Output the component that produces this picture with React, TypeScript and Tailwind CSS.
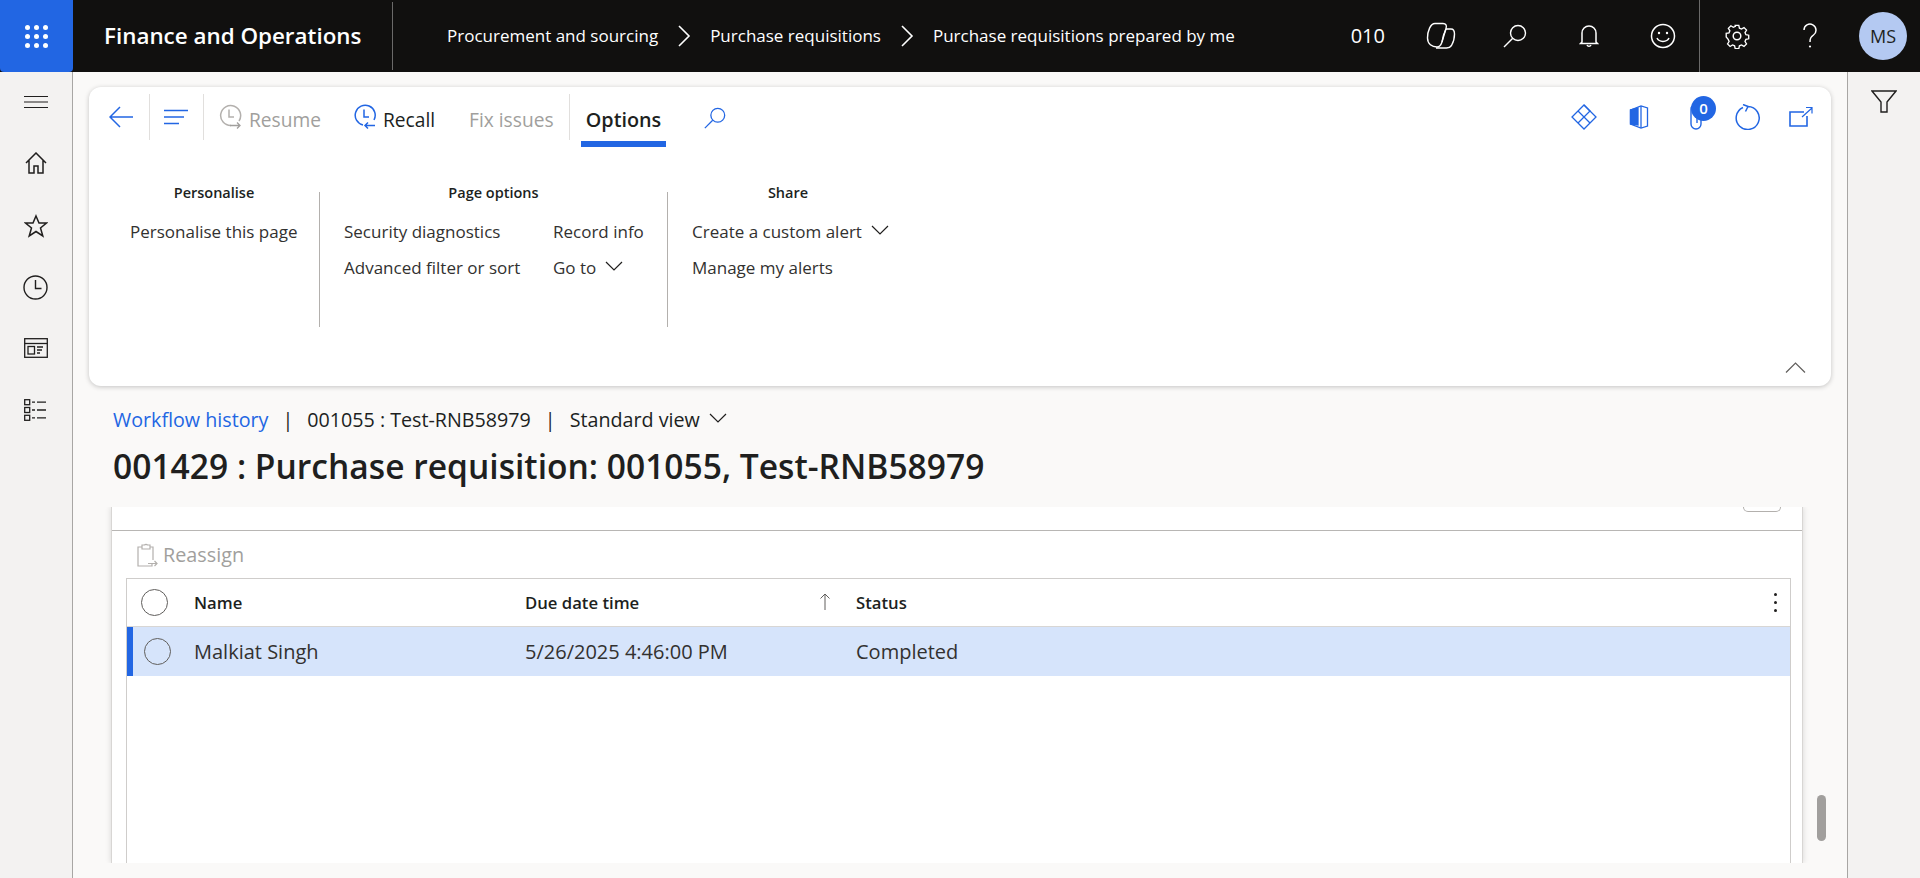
import React from "react";

const S = ({ w = 24, h = 24, vb = "0 0 24 24", c = "currentColor", sw = 1.5, children, className = "" }: any) => (
  <svg width={w} height={h} viewBox={vb} fill="none" stroke={c} strokeWidth={sw} className={"shrink-0 " + className}>{children}</svg>
);
const Chevron = ({ w = 18, h = 10, c = "#201f1e" }: any) => (
  <svg width={w} height={h} viewBox="0 0 18 10" fill="none" stroke={c} strokeWidth="1.2" className="mb-[4px] shrink-0"><path d="M1 1l8 8 8-8" /></svg>
);
const Crumb = () => (
  <svg width="14" height="22" viewBox="0 0 14 22" fill="none" stroke="#fff" strokeWidth="1.6" className="shrink-0"><path d="M2 1l10 10L2 21" /></svg>
);
const Search = ({ c = "#fff", s = 26 }: any) => (
  <S w={s} h={s} vb="0 0 26 26" c={c} sw={1.4}><circle cx="16" cy="10" r="7.5" /><path d="M10.5 15.5L2 24" /></S>
);
const HistoryIcon = ({ c, arrow }: any) => (
  <S w={24} h={26} vb="0 0 24 26" c={c} sw={1.5}>
    <path d="M13 21.5a10 10 0 1 1 8-4.5" />
    <path d="M11 5.5v7.5h5" />
    <path d="M12 21.5h10M19 18.5l3 3-3 3" stroke={arrow} strokeWidth={1.3} />
  </S>
);
const RecallIcon = () => (
  <S w={24} h={26} vb="0 0 24 26" c="#2266e3" sw={1.5}>
    <path d="M10 21a10 10 0 1 1 11-5" />
    <path d="M11 5.5v7.5h5" />
    <path d="M12 21.5h10M15 18.5l-3 3 3 3" />
  </S>
);

function TopBar() {
  return (
    <header className="flex h-[72px] items-center bg-[#11100f] text-white">
      <div className="flex h-[72px] w-[73px] items-center justify-center rounded-b bg-[#2266e3]">
        <div className="grid grid-cols-3 gap-x-[4px] gap-y-[4px]">
          {Array.from({ length: 9 }).map((_, i) => <span key={i} className="h-[5px] w-[5px] rounded-full bg-white" />)}
        </div>
      </div>
      <div className="ml-[31px] w-[288px] text-[22.4px] font-semibold leading-none">Finance and Operations</div>
      <div className="h-[68px] w-px bg-[#6b6a69]" />
      <nav className="ml-[54px] flex items-center text-[17px]">
        <span>Procurement and sourcing</span>
        <span className="mx-[19px]"><Crumb /></span>
        <span>Purchase requisitions</span>
        <span className="mx-[19px]"><Crumb /></span>
        <span>Purchase requisitions prepared by me</span>
      </nav>
      <div className="ml-auto flex h-full items-center">
        <span className="mr-[19px] text-[20px]">010</span>
        <div className="flex h-full w-[74px] items-center justify-center">
          <S w={30} h={28} vb="0 0 30 28" c="#fff" sw={1.4}>
            <path d="M9 1.500h8c3 0 4 2 3 5L16 20c-1 3-2 5-5 5-5 0-9.500-3-9.500-9 0-7 3-14.500 7.500-14.500z" />
            <path d="M20 7h5c2.500 0 3.500 2 3.500 5 0 5-1.500 9-3 11.500-1 1.500-2.500 2.500-5 2.500H10" />
            <path d="M16 20c.5-4 2-9 4-13" />
          </S>
        </div>
        <div className="flex h-full w-[74px] items-center justify-center"><Search /></div>
        <div className="flex h-full w-[74px] items-center justify-center">
          <S w={20} h={24} vb="0 0 20 24" c="#fff" sw={1.5}>
            <path d="M3 18V9a7 7 0 0 1 14 0v9l1.500 1.500h-17z" /><path d="M8 21a2.200 2.200 0 0 0 4 0" />
          </S>
        </div>
        <div className="flex h-full w-[73px] items-center justify-center">
          <S w={26} h={26} vb="0 0 26 26" c="#fff" sw={1.5}>
            <circle cx="13" cy="13" r="11.500" /><path d="M7 15c2 4.500 10 4.500 12 0" />
            <circle cx="9" cy="10" r="1.200" fill="#fff" stroke="none" /><circle cx="17" cy="10" r="1.200" fill="#fff" stroke="none" />
          </S>
        </div>
        <div className="h-full w-px bg-[#6b6a69]" />
        <div className="flex h-full w-[73px] items-center justify-center">
          <S w={26} h={26} vb="0 0 26 26" c="#fff" sw={1.5}>
            <circle cx="13" cy="13" r="3.800" />
            <path d="M11 2h4l.7 3.200 2.300 1 2.800-1.700 2.800 2.800-1.700 2.800 1 2.300 3.100.6v4l-3.100.7-1 2.300 1.700 2.700-2.800 2.800-2.800-1.700-2.300 1-.7 3.100h-4l-.7-3.100-2.300-1-2.700 1.700-2.800-2.800 1.700-2.700-1-2.300L1 15v-4l3.100-.6 1-2.300-1.700-2.800 2.800-2.800 2.700 1.700 2.300-1z" transform="translate(1.300 0.500) scale(.9)" />
          </S>
        </div>
        <div className="flex h-full w-[73px] items-center justify-center">
          <S w={16} h={26} vb="0 0 16 26" c="#fff" sw={1.5}>
            <path d="M2 7a6 6 0 1 1 9.500 5C9 14 8 15 8 19" /><circle cx="8" cy="23.500" r="1.100" fill="#fff" stroke="none" />
          </S>
        </div>
        <div className="ml-[13px] mr-[13px] flex h-[48px] w-[48px] items-center justify-center rounded-full bg-[#b4c9f2] text-[18px] text-[#201f1e]">MS</div>
      </div>
    </header>
  );
}

function LeftRail() {
  const c = "#201f1e";
  return (
    <aside className="flex w-[73px] shrink-0 flex-col items-center border-r border-[#a8a6a4] bg-[#f3f2f1] pt-[24px] pr-[1px]">
      <S w={24} h={12} vb="0 0 24 12" c={c} sw={1}><path d="M0 .5h24M0 6h24M0 11.500h24" /></S>
      <div className="mt-[44px] h-[22px]"><S w={22} h={22} vb="0 0 22 22" c={c} sw={1.5}><path d="M1 11L11 1l10 10M4 8.500V21h5v-7h4v7h5V8.500" /></S></div>
      <div className="mt-[40px] h-[24px]"><S w={24} h={24} vb="0 0 24 24" c={c} sw={1.5}><path d="M12 2l3 7h7.500l-6 5 2.300 8L12 17.500 5.200 22l2.300-8-6-5H9z" /></S></div>
      <div className="mt-[37px] h-[25px]"><S w={25} h={25} vb="0 0 25 25" c={c} sw={1.4}><circle cx="12.500" cy="12.500" r="11.500" /><path d="M12.500 5v8.500h6" /></S></div>
      <div className="mt-[38px] h-[20px]"><S w={24} h={20} vb="0 0 24 20" c={c} sw={1.3}><rect x=".7" y=".7" width="22.600" height="18.600" /><path d="M.7 5.500h22.600" /><rect x="4" y="8.500" width="6.500" height="7.500" /><path d="M13 9h6M13 12h5M13 15h3" /></S></div>
      <div className="mt-[41px] h-[22px]"><S w={24} h={22} vb="0 0 24 22" c={c} sw={1.3}><rect x=".7" y=".7" width="5" height="5" /><rect x=".7" y="8.500" width="5" height="5" /><rect x=".7" y="16.300" width="5" height="5" /><path d="M8 3.200h3M13 3.200h9M8 11h3M13 11h9M8 18.800h3M13 18.800h9" /></S></div>
    </aside>
  );
}

function Ribbon() {
  const b = "#2266e3";
  return (
    <section className="mx-[16px] mt-[15px] h-[299px] shrink-0 rounded-[12px] bg-white shadow-[0_1px_5px_rgba(0,0,0,0.22)]">
      <div className="flex h-[86px] items-start pt-[7px]">
        <div className="flex h-[46px] w-[60px] items-center justify-center pl-[3px]">
          <S w={24} h={22} vb="0 0 24 22" c={b} sw={1.5}><path d="M11 1L1 11l10 10M1 11h23" /></S>
        </div>
        <div className="h-[46px] w-px bg-[#e1dfdd]" />
        <div className="flex h-[46px] w-[53px] items-center justify-center pr-[2px]">
          <S w={24} h={16} vb="0 0 24 16" c={b} sw={1.5}><path d="M0 1.500h24M0 8h20M0 14.500h15" /></S>
        </div>
        <div className="h-[46px] w-px bg-[#e1dfdd]" />
        <div className="ml-[14px] flex h-[46px] items-center gap-[7px] text-[19.200px] text-[#a19f9d]">
          <HistoryIcon c="#b3b0ad" arrow="#a19f9d" />
          <span className="w-[71px] pt-[6px]">Resume</span>
        </div>
        <div className="ml-[33px] flex h-[46px] items-center gap-[6px] text-[19.200px] text-[#201f1e]">
          <RecallIcon />
          <span className="w-[53px] pt-[6px]">Recall</span>
        </div>
        <div className="ml-[33px] flex h-[46px] w-[100px] items-center whitespace-nowrap pt-[6px] text-[19.200px] text-[#a19f9d]">Fix issues</div>
        <div className="h-[46px] w-px bg-[#e1dfdd]" />
        <div className="ml-[11px] flex h-[53px] w-[85px] items-center justify-center border-b-[6px] border-[#2266e3] pt-[5px] text-[19.800px] font-semibold text-[#201f1e]">Options</div>
        <div className="ml-[37px] mt-[12px]"><Search c={b} s={24} /></div>
        <div className="ml-auto flex h-[46px] items-center pr-[18px]">
          <S w={26} h={26} vb="0 0 26 26" c={b} sw={1.3}><path d="M13 1l12 12-12 12L1 13z" /><path d="M13 1l6 6-12 12M7 7l12 12" /></S>
          <div className="ml-[32px]">
            <S w={20} h={24} vb="0 0 20 24" c={b} sw={1.3}>
              <path d="M1.500 5L12 1l6.500 2v18L12 23 1.500 19z" />
              <path d="M1.500 5L9 3v17l-7.500-1z" fill={b} />
              <path d="M12 1v22" />
            </S>
          </div>
          <div className="relative ml-[40px]">
            <S w={14} h={26} vb="0 0 14 26" c={b} sw={1.4}><path d="M12 6v14a5 5 0 0 1-10 0V5a3 3 0 0 1 6 0v14" /></S>
            <span className="absolute left-[2px] top-[-8px] flex h-[25px] w-[25px] items-center justify-center rounded-full bg-[#2266e3] text-[15px] font-semibold text-white">0</span>
          </div>
          <div className="ml-[32px]"><S w={26} h={26} vb="0 0 26 26" c={b} sw={1.5}><path d="M8 3.500a11.500 11.500 0 1 0 5-1M8 .5l5 2-2.500 5" /></S></div>
          <div className="ml-[28px]"><S w={24} h={22} vb="0 0 24 22" c={b} sw={1.6}><path d="M18 10v10H1V6h14" /><path d="M13 11L23 2M17 1.500h6v6" strokeWidth={1.2} /></S></div>
        </div>
      </div>
      <div className="flex h-[154px] items-stretch pt-[10px] text-[17px] text-[#323130]">
        <div className="w-[230px]">
          <div className="pl-[20px] text-center text-[14.500px] font-semibold leading-[20px] text-[#201f1e]">Personalise</div>
          <div className="mt-[19px] pl-[41px] leading-[20px]">Personalise this page</div>
        </div>
        <div className="mt-[9px] w-px bg-[#b3b0ad]" />
        <div className="w-[347px]">
          <div className="text-center text-[14.500px] font-semibold leading-[20px] text-[#201f1e]">Page options</div>
          <div className="mt-[19px] grid grid-cols-[209px_1fr] gap-y-[16px] pl-[24px] leading-[20px]">
            <span>Security diagnostics</span><span>Record info</span>
            <span>Advanced filter or sort</span><span className="flex items-center gap-[9px]">Go to <Chevron /></span>
          </div>
        </div>
        <div className="mt-[9px] w-px bg-[#b3b0ad]" />
        <div className="w-[240px]">
          <div className="text-center text-[14.500px] font-semibold leading-[20px] text-[#201f1e]">Share</div>
          <div className="mt-[19px] flex flex-col gap-y-[16px] pl-[24px] leading-[20px]">
            <span className="flex items-center gap-[9px] whitespace-nowrap">Create a custom alert <Chevron /></span>
            <span>Manage my alerts</span>
          </div>
        </div>
      </div>
      <div className="flex justify-end pr-[25px] pt-[35px]">
        <svg width="21" height="11" viewBox="0 0 21 11" fill="none" stroke="#605e5c" strokeWidth="1.2"><path d="M1 10.500l9.500-9.500 9.500 9.500" /></svg>
      </div>
    </section>
  );
}

function Content() {
  return (
    <div className="flex min-h-0 flex-1 flex-col">
      <div className="ml-[40px] mt-[22px] flex h-[24px] items-center text-[19.700px] leading-none text-[#201f1e]">
        <span className="text-[#2266e3]">Workflow history</span>
        <span className="mx-[14px]">|</span>
        <span>001055 : Test-RNB58979</span>
        <span className="mx-[14px]">|</span>
        <span>Standard view</span>
        <span className="ml-[9px] flex items-center"><Chevron /></span>
      </div>
      <h1 className="ml-[40px] mt-[15px] whitespace-nowrap text-[33.600px] font-semibold leading-[38px] text-[#201f1e]">001429 : Purchase requisition: 001055, Test-RNB58979</h1>
      <div className="mt-[22px] flex h-[356px] shrink-0">
        <div className="ml-[38px] flex w-[1692px] shrink-0 flex-col border-x border-[#d8d6d4] bg-white shadow-[0_0_6px_rgba(0,0,0,0.14)] [clip-path:inset(0_-8px_0_-8px)]">
          <div className="flex h-[24px] shrink-0 justify-end border-b border-[#b8b6b4] pr-[21px]">
            <div className="h-[5px] w-[38px] rounded-b-[5px] border border-t-0 border-[#b3b0ad]" />
          </div>
          <div className="flex h-[47px] shrink-0 items-center pl-[24px] text-[19.800px] text-[#a19f9d]">
            <S w={22} h={24} vb="0 0 22 24" c="#b3b0ad" sw={1.2} className="mr-[5px]">
              <path d="M6 4H2v19h14v-3M14 4h3v13" /><path d="M6 6V2h2.500a2 2 0 0 1 3 0H14v4z" /><path d="M12 20.500h9M18.500 18l2.500 2.500-2.500 2.500" />
            </S>
            Reassign
          </div>
          <div className="ml-[14px] mr-[11px] flex min-h-0 flex-1 flex-col border-x border-t border-[#cfcdcb]">
            <div className="flex h-[48px] shrink-0 items-center border-b border-[#d8d6d4] text-[16.700px] font-semibold text-[#201f1e]">
              <div className="flex w-[67px] justify-center pr-[12px]"><span className="h-[27px] w-[27px] rounded-full border border-[#605e5c]" /></div>
              <div className="w-[331px]">Name</div>
              <div className="relative flex w-[331px] items-center">
                Due date time
                <svg width="12" height="18" viewBox="0 0 12 18" fill="none" stroke="#605e5c" strokeWidth="1" className="absolute left-[294px] top-[3px]"><path d="M6 17V1M1.500 5.500L6 1l4.500 4.500" /></svg>
              </div>
              <div className="flex-1">Status</div>
              <div className="flex w-[30px] flex-col items-start gap-[5px] pl-[14px]">
                <span className="h-[3px] w-[3px] rounded-full bg-[#201f1e]" />
                <span className="h-[3px] w-[3px] rounded-full bg-[#201f1e]" />
                <span className="h-[3px] w-[3px] rounded-full bg-[#201f1e]" />
              </div>
            </div>
            <div className="flex h-[49px] shrink-0 items-center border-l-[6px] border-[#2266e3] bg-[#d6e4fb] text-[20px] text-[#323130]">
              <div className="flex w-[61px] justify-center pr-[12px]"><span className="h-[27px] w-[27px] rounded-full border border-[#605e5c]" /></div>
              <div className="w-[331px]">Malkiat Singh</div>
              <div className="w-[331px]">5/26/2025 4:46:00 PM</div>
              <div>Completed</div>
            </div>
          </div>
        </div>
        <div className="ml-[14px] mt-[288px] h-[46px] w-[9px] rounded-full bg-[#a19f9d]" />
      </div>
    </div>
  );
}

function RightRail() {
  return (
    <aside className="flex w-[73px] shrink-0 justify-center border-l border-[#a8a6a4] bg-[#f3f2f1] pt-[18px]">
      <S w={26} h={24} vb="0 0 26 24" c="#201f1e" sw={1.4}><path d="M1 1h24L16 12v10h-6V12z" /></S>
    </aside>
  );
}

export default function App() {
  return (
    <div className="flex h-[878px] flex-col overflow-hidden bg-[#faf9f8] font-['Open_Sans',sans-serif]">
      <TopBar />
      <div className="flex min-h-0 flex-1">
        <LeftRail />
        <main className="flex min-w-0 flex-1 flex-col">
          <Ribbon />
          <Content />
        </main>
        <RightRail />
      </div>
    </div>
  );
}
